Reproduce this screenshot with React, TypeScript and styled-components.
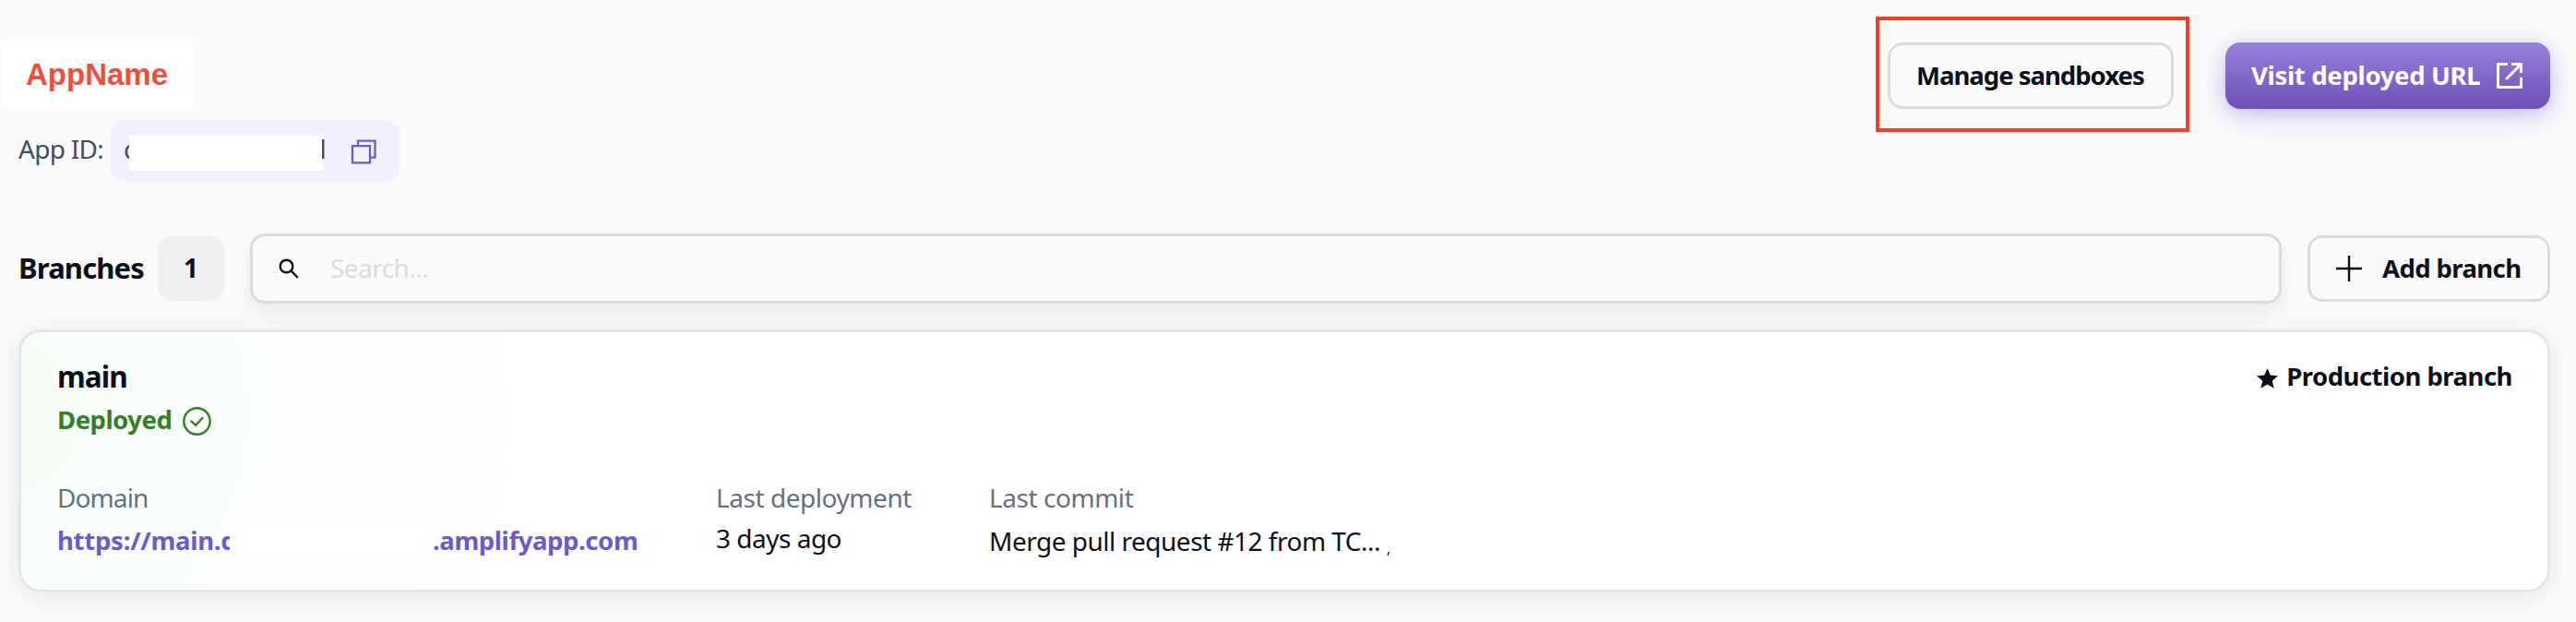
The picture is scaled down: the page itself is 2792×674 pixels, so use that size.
import React from "react";
import styled, { createGlobalStyle } from "styled-components";

const ink = "#0b1018";
const purple = "#6c5ac8";

const GlobalStyle = createGlobalStyle`
  * { box-sizing: border-box; }
  body {
    margin: 0;
    background: #fafafa;
    color: ${ink};
    font-family: "Noto Sans", "Open Sans", sans-serif;
  }
  button { font-family: inherit; color: inherit; margin: 0; }
`;

const Page = styled.main`
  width: 100%;
  height: 674px;
  padding: 18px 28px 0 20px;
  overflow: hidden;
`;

const Header = styled.header`
  display: flex;
  justify-content: space-between;
  align-items: flex-start;
  height: 179px;
`;

const Identity = styled.div`
  display: flex;
  flex-direction: column;
  align-items: flex-start;
  gap: 14px;
  padding-top: 26px;
`;

const AppTitle = styled.h1`
  margin: 0 0 0 -19px;
  width: 209px;
  height: 72px;
  padding-left: 27px;
  background: #fff;
  color: #ee4f3c;
  font: 700 33px/73px "Liberation Sans", Arial, sans-serif;
`;

const AppIdRow = styled.div`
  display: flex;
  align-items: center;
  height: 67px;
  color: #414d5c;
  font-size: 28px;
  line-height: 62px;
  letter-spacing: -0.7px;
`;

const AppIdLabel = styled.span`
  width: 100px;
  height: 67px;
`;

const AppIdPill = styled.div`
  display: flex;
  align-items: center;
  width: 314px;
  height: 67px;
  padding: 0 27px 0 14px;
  border-radius: 16px;
  background: #f2f0fe;
`;

const Clip = styled.span<{ $width: number; $fromEnd?: boolean }>`
  display: flex;
  justify-content: ${(p) => (p.$fromEnd ? "flex-end" : "flex-start")};
  flex: none;
  width: ${(p) => p.$width}px;
  height: 67px;
  overflow: hidden;
`;

const IdMask = styled.span`
  width: 209px;
  height: 38px;
  margin-top: 5px;
  background: #fff;
`;

const CopyIcon = styled.svg`
  display: block;
  width: 28px;
  height: 28px;
  margin-left: auto;
  overflow: visible;
`;

const Actions = styled.div`
  display: flex;
  align-items: flex-start;
  gap: 39px;
`;

const Highlight = styled.div`
  width: 340px;
  height: 125px;
  padding: 24px 9px;
  border: 4px solid #ee4124;
`;

const Button = styled.button<{ $width: number; $tracking: number }>`
  display: flex;
  align-items: center;
  width: ${(p) => p.$width}px;
  height: 72px;
  padding: 0 0 0 28px;
  border: 3px solid #dadbdd;
  border-radius: 16px;
  background: #fafafa;
  font-size: 27.5px;
  font-weight: 700;
  line-height: 38px;
  letter-spacing: ${(p) => p.$tracking}px;
  white-space: nowrap;
`;

const PrimaryButton = styled(Button)`
  margin-top: 28px;
  justify-content: space-between;
  padding: 0 29px 0 28px;
  border: 0;
  background: linear-gradient(#9780da, #6f50b8);
  box-shadow: 0 8px 32px rgba(104, 78, 222, 0.22), 0 4px 16px rgba(104, 78, 222, 0.2);
  color: #fff;
`;

const ExternalIcon = styled.svg`
  display: block;
  width: 30px;
  height: 30px;
`;

const Toolbar = styled.section`
  display: flex;
  align-items: center;
  height: 76px;
  margin-top: 56px;
`;

const SectionTitle = styled.h2`
  width: 151px;
  margin: 0;
  padding-bottom: 3px;
  font-size: 31px;
  line-height: 42px;
  letter-spacing: -0.85px;
`;

const CountBadge = styled.span`
  width: 72px;
  height: 70px;
  border-radius: 16px;
  background: #f0f0f0;
  font-size: 28px;
  font-weight: 700;
  line-height: 69px;
  text-align: center;
`;

const SearchBox = styled.div`
  display: flex;
  align-items: center;
  flex: 1;
  height: 76px;
  margin: 0 28px;
  padding-left: 28px;
  border: 3px solid #dadbdd;
  border-radius: 16px;
  background: #fafafa;
  box-shadow: 0 8px 20px rgba(0, 7, 22, 0.07);
`;

const SearchIcon = styled.svg`
  display: block;
  width: 22px;
  height: 22px;
  margin: 0 34px 1px 0;
`;

const SearchInput = styled.input`
  flex: 1;
  height: 60px;
  padding: 0 0 2px;
  border: 0;
  outline: 0;
  background: transparent;
  font: 400 28px "Noto Sans", sans-serif;
  letter-spacing: -0.55px;
  &::placeholder { color: #dadbdd; opacity: 1; }
`;

const PlusIcon = styled.svg`
  display: block;
  width: 28px;
  height: 28px;
  margin-right: 22px;
`;

const BranchCard = styled.article`
  height: 285px;
  margin-top: 28px;
  padding: 26px 38px 0 39px;
  border: 3px solid #e4e5ea;
  border-radius: 24px;
  background: radial-gradient(circle at -20px 90px, #f4fcf5 0, #fafefb 240px, #fdfefc 410px, #fff 580px);
  box-shadow: 0 4px 30px rgba(0, 7, 22, 0.08);
`;

const CardHeader = styled.div`
  display: flex;
  justify-content: space-between;
  align-items: flex-start;
  height: 44px;
`;

const BranchName = styled.h3`
  margin: 0;
  font-size: 31.5px;
  line-height: 44px;
  letter-spacing: -0.9px;
`;

const Production = styled.div`
  display: flex;
  align-items: center;
  gap: 9px;
  font-size: 27.5px;
  font-weight: 700;
  line-height: 44px;
  letter-spacing: -0.5px;
`;

const StarIcon = styled.svg`
  display: block;
  width: 23px;
  height: 22px;
  margin-top: 3px;
`;

const Status = styled.div`
  display: flex;
  align-items: center;
  gap: 12px;
  height: 50px;
  color: #347f24;
  font-size: 27.5px;
  font-weight: 700;
  line-height: 46px;
  letter-spacing: -0.5px;
`;

const StatusIcon = styled.svg`
  display: block;
  width: 31px;
  height: 31px;
  margin-top: 2px;
`;

const Details = styled.dl`
  display: grid;
  grid-template-columns: 714px 296px 500px;
  margin: 39px 0 0;
`;

const Term = styled.dt<{ $tracking?: number }>`
  height: 40px;
  color: #656f83;
  font-size: 28px;
  line-height: 40px;
  letter-spacing: ${(p) => p.$tracking ?? -0.45}px;
`;

const Value = styled.dd<{ $top: number }>`
  display: flex;
  height: 40px;
  margin: ${(p) => p.$top}px 0 0;
  font-size: 28px;
  line-height: 40px;
  letter-spacing: -0.5px;
  white-space: nowrap;
`;

const DomainLink = styled.a`
  display: flex;
  color: ${purple};
  font-size: 27.5px;
  font-weight: 700;
  letter-spacing: -0.25px;
`;

const LinkStart = styled.span`
  width: 187px;
  height: 40px;
  overflow: hidden;
`;

const LinkMask = styled.span`
  width: 220px;
  height: 37px;
  margin-top: 2px;
  background: #fefffe;
`;

const LinkEnd = styled.span`
  letter-spacing: -0.4px;
`;

const CommitTail = styled.svg`
  width: 3px;
  height: 4px;
  margin: 32px 0 0 7px;
`;

export default function App() {
  return (
    <>
      <GlobalStyle />
      <Page>
        <Header>
          <Identity>
            <AppTitle>AppName</AppTitle>
            <AppIdRow>
              <AppIdLabel>App ID:</AppIdLabel>
              <AppIdPill>
                <Clip $width={6}>d</Clip>
                <IdMask />
                <Clip $width={4} $fromEnd>l</Clip>
                <CopyIcon viewBox="0 0 28 28" fill="none" stroke={purple} strokeWidth="2.300">
                  <path d="M3 8.200h19v18.200H3z" />
                  <path d="M9 8V2.700h18.500v18H22.500" />
                </CopyIcon>
              </AppIdPill>
            </AppIdRow>
          </Identity>
          <Actions>
            <Highlight>
              <Button $width={310} $tracking={-1}>Manage sandboxes</Button>
            </Highlight>
            <PrimaryButton $width={352} $tracking={-0.32}>
              Visit deployed URL
              <ExternalIcon viewBox="0 0 30 30" fill="none" stroke="#fff" strokeWidth="3">
                <path d="M13 2.500H2.500v25h25V17" strokeLinejoin="round" />
                <path d="M17 2.500h10.500V12" strokeLinejoin="round" />
                <path d="M27 3 12 18" strokeLinecap="round" />
              </ExternalIcon>
            </PrimaryButton>
          </Actions>
        </Header>

        <Toolbar>
          <SectionTitle>Branches</SectionTitle>
          <CountBadge>1</CountBadge>
          <SearchBox>
            <SearchIcon viewBox="0 0 22 22" fill="none" stroke={ink} strokeWidth="2.400">
              <circle cx="8.500" cy="8.500" r="6.800" />
              <path d="m13.500 13.500 7.300 7.300" />
            </SearchIcon>
            <SearchInput placeholder="Search..." aria-label="Search branches" />
          </SearchBox>
          <Button $width={263} $tracking={-0.6}>
            <PlusIcon viewBox="0 0 28 28" fill="none" stroke={ink} strokeWidth="2.400">
              <path d="M14 0v28M0 14h28" />
            </PlusIcon>
            Add branch
          </Button>
        </Toolbar>

        <BranchCard>
          <CardHeader>
            <BranchName>main</BranchName>
            <Production>
              <StarIcon viewBox="0 0 24 23" fill={ink}>
                <path d="M12 0l3.400 7.900 8.600.7-6.500 5.700 2 8.400L12 18.200l-7.500 4.500 2-8.400L0 8.600l8.600-.7z" />
              </StarIcon>
              Production branch
            </Production>
          </CardHeader>
          <Status>
            Deployed
            <StatusIcon viewBox="0 0 31 31" fill="none" stroke="currentColor" strokeWidth="2.400">
              <circle cx="15.500" cy="15.500" r="14.200" />
              <path d="m8.800 14.800 5.300 5 8-8.500" />
            </StatusIcon>
          </Status>
          <Details>
            <div>
              <Term $tracking={-0.9}>Domain</Term>
              <Value $top={7}>
                <DomainLink>
                  <LinkStart>https://main.d</LinkStart>
                  <LinkMask />
                  <LinkEnd>.amplifyapp.com</LinkEnd>
                </DomainLink>
              </Value>
            </div>
            <div>
              <Term>Last deployment</Term>
              <Value $top={4}>3 days ago</Value>
            </div>
            <div>
              <Term>Last commit</Term>
              <Value $top={7}>
                Merge pull request #12 from TC...
                <CommitTail viewBox="0 0 3 4" stroke={ink} strokeWidth="1.300">
                  <path d="M2.500 0 1 4" />
                </CommitTail>
              </Value>
            </div>
          </Details>
        </BranchCard>
      </Page>
    </>
  );
}
